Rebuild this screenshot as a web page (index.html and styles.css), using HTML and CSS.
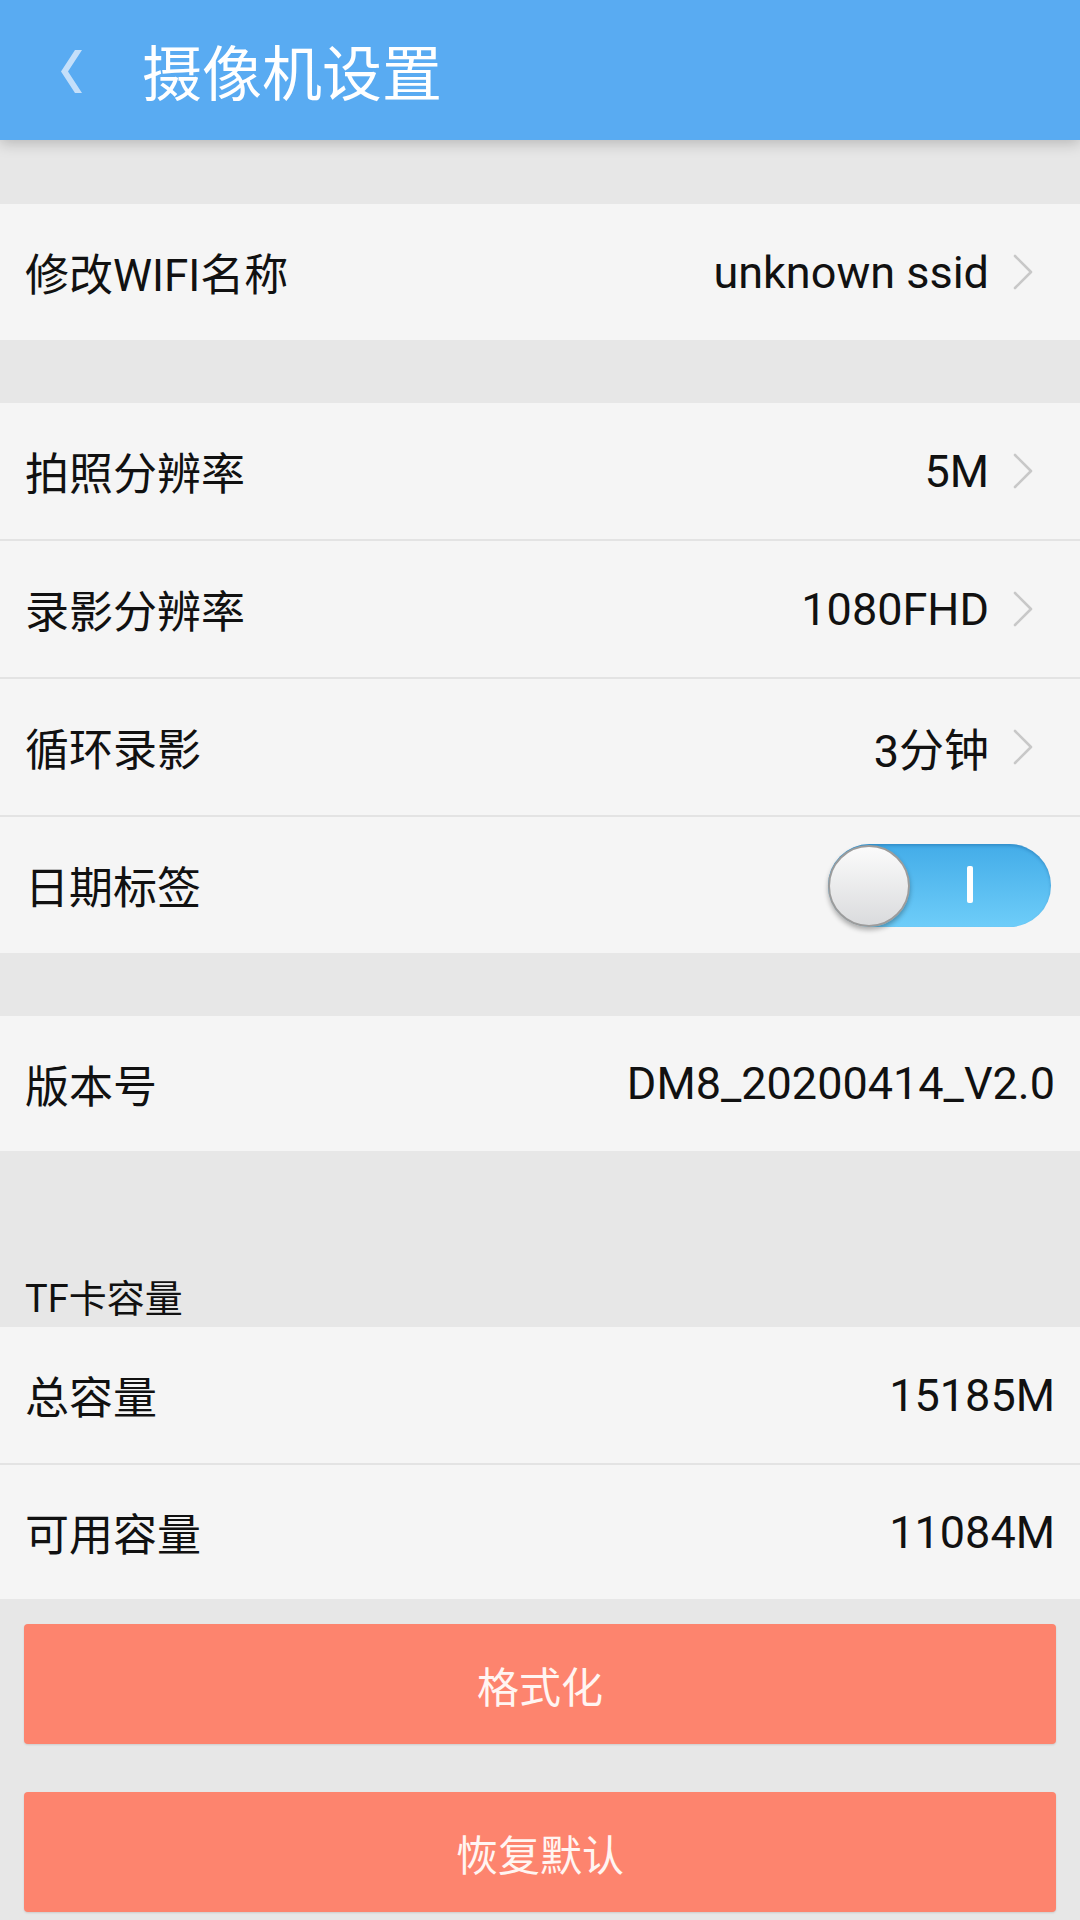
FILE: index.html
```html
<!DOCTYPE html>
<html>
<head>
  <meta charset="utf-8">
  <meta name="viewport" content="width=device-width">
  <title>摄像机设置</title>
<link rel="stylesheet" href="styles.css">
</head>
<body>
 <div id="main">
  <div class="bar">
   <svg class="back" viewBox="0 0 21 43" width="21" height="43"><polygon points="14,0 21,0 7,21.5 21,43 14,43 0,21.5" fill="#c4dffa"/></svg>
   <div class="title">摄像机设置</div>
  </div>

  <div class="gap first"></div>
  <div class="group">
   <div class="row"><span class="lbl">修改WIFI名称</span><span class="val">unknown ssid</span><svg class="arr" viewBox="0 0 20 36" width="20" height="36"><polyline points="2,2 18,18 2,34"/></svg></div>
  </div>

  <div class="gap"></div>
  <div class="group">
   <div class="row"><span class="lbl">拍照分辨率</span><span class="val">5M</span><svg class="arr" viewBox="0 0 20 36" width="20" height="36"><polyline points="2,2 18,18 2,34"/></svg></div>
   <div class="row"><span class="lbl">录影分辨率</span><span class="val">1080FHD</span><svg class="arr" viewBox="0 0 20 36" width="20" height="36"><polyline points="2,2 18,18 2,34"/></svg></div>
   <div class="row"><span class="lbl">循环录影</span><span class="val">3分钟</span><svg class="arr" viewBox="0 0 20 36" width="20" height="36"><polyline points="2,2 18,18 2,34"/></svg></div>
   <div class="row sw-row"><span class="lbl">日期标签</span>
    <div class="switch"><div class="knob"></div><div class="mark"></div></div>
   </div>
  </div>

  <div class="gap"></div>
  <div class="group">
   <div class="row plain"><span class="lbl">版本号</span><span class="val">DM8_20200414_V2.0</span></div>
  </div>

  <div class="gap big"><span class="sect">TF卡容量</span></div>
  <div class="group">
   <div class="row plain"><span class="lbl">总容量</span><span class="val">15185M</span></div>
   <div class="row plain"><span class="lbl">可用容量</span><span class="val">11084M</span></div>
  </div>

  <div class="btns">
   <a class="btn" href="#">格式化</a>
   <a class="btn" href="#">恢复默认</a>
  </div>
 </div>
</body>
</html>
```

FILE: styles.css
```css
*,*:before,*:after {box-sizing:border-box;}
body{
 background:#e7e7e7;
 width:1080px;
 height:1920px;
 margin:0;
 padding:0;
 overflow:hidden;
 font-family:Roboto,"Noto Sans CJK SC",sans-serif;
 color:#111;
}
#main{
 display:flex;
 flex-direction:column;
 width:100%;
 height:100%;
}
.bar{
 height:140px;
 flex:none;
 background:#59abf2;
 display:flex;
 align-items:center;
 padding-left:61px;
 position:relative;
 z-index:1;
 box-shadow:0 3px 14px rgba(0,0,0,0.22);
}
.back{display:block;margin-top:2px;}
.title{
 margin-left:60px;
 color:#fff;
 font-family:"Noto Sans CJK SC",sans-serif;
 font-size:60px;
 line-height:1;
}
.gap{height:63px;flex:none;}
.gap.first{height:64px;}
.gap.big{
 height:176px;
 display:flex;
 align-items:flex-end;
 padding:0 0 4px 25px;
}
.sect{font-size:38px;line-height:1.2;}
.group{background:#f5f5f5;flex:none;}
.row{
 height:136px;
 display:flex;
 align-items:center;
 padding:0 47px 0 25px;
 font-size:44px;
}
.row + .row{border-top:2px solid #e3e3e3;height:138px;}
.row.plain{padding-right:25px;}
.row.plain + .row.plain{height:136px;}
.group .row.plain:only-child{height:135px;}
.lbl{flex:1;}
.val{white-space:nowrap;font-size:45px;}
.arr{display:block;margin-left:24px;}
.arr polyline{fill:none;stroke:#c8c8c8;stroke-width:2.6;stroke-linecap:round;stroke-linejoin:round;}
.sw-row{padding-right:29px;}
.switch{
 position:relative;
 width:223px;
 height:83px;
 border-radius:42px;
 background:linear-gradient(#43ace8,#6ecdf9);
 box-shadow:inset 0 2px 3px rgba(0,60,120,0.25);
}
.knob{
 position:absolute;
 left:0;
 top:1px;
 width:82px;
 height:82px;
 border-radius:50%;
 border:2px solid #9c9c9c;
 background:linear-gradient(#fbfbfb,#dadbdd);
 box-shadow:0 3px 5px rgba(0,0,0,0.3);
}
.mark{
 position:absolute;
 left:139px;
 top:22px;
 width:6px;
 height:37px;
 border-radius:2px;
 background:#fff;
}
.btns{
 display:flex;
 flex-direction:column;
 gap:48px;
 padding:25px 24px 0 24px;
}
.btn{
 display:flex;
 align-items:center;
 justify-content:center;
 height:120px;
 background:#fd846e;
 color:#fff5f2;
 border-radius:4px;
 text-decoration:none;
 font-family:"Noto Sans CJK SC",sans-serif;
 font-size:42px;
 box-shadow:0 1px 2px rgba(0,0,0,0.12);
}
```
